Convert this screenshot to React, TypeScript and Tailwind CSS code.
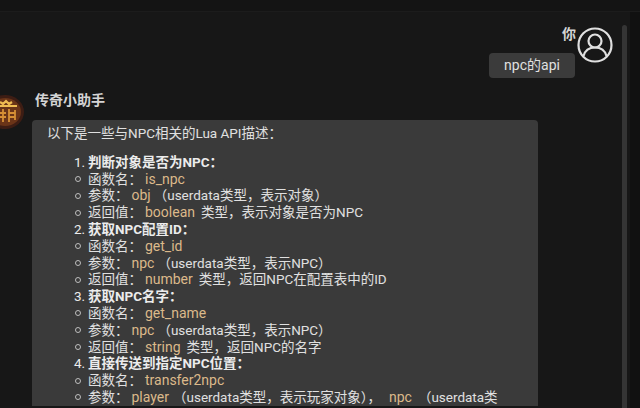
import React from 'react';
function C({ children, gap = 'sm', far }: { children: React.ReactNode; gap?: 'sm' | 'md' | 'lg'; far?: boolean }) {
  const cls = gap === 'lg' ? 'mr-[6px]' : gap === 'md' ? 'mr-[4px]' : 'mr-[3px]';
  return <span className={`text-[#dcb98a] text-[14px] ${far ? 'ml-[8px]' : 'ml-[3px]'} ${cls}`}>{children}</span>;
}
function Sub({ children }: { children: React.ReactNode }) {
  return (
    <div className="flex h-[16.8px] items-center">
      <span className="w-[6px] h-[6px] rounded-full border border-[#bdbdbd] ml-[43px] mr-[7px] shrink-0" />
      <span className="whitespace-nowrap">{children}</span>
    </div>
  );
}
function Head({ n, children }: { n: number; children: React.ReactNode }) {
  return (
    <div className="flex h-[16.8px] items-center font-bold whitespace-nowrap pl-[42px] text-[#ececec]">
      <span className="font-normal w-[14px] shrink-0">{n}.</span>
      {children}
    </div>
  );
}
export default function App() {
  return (
    <div className="w-[640px] h-[408px] overflow-hidden bg-[#171717] text-[#e0e0e0] text-[13.5px] flex flex-col font-['Roboto','Noto_Sans_CJK_SC',sans-serif] leading-[16.8px]">
      <div className="h-[12px] bg-[#141414] border-b border-[#1c1c1c] shrink-0" />
      <div className="flex-1 flex min-h-0">
        <div className="w-[622px] flex flex-col min-w-0">
          <div className="flex justify-end pr-[9px] pt-[14px] h-[78px] shrink-0">
            <div className="flex flex-col items-end">
              <div className="font-bold text-[14px] text-[#d4d4d4] h-[27px] -translate-x-[1px]">你</div>
              <div className="bg-[#3b3b3b] rounded-[4px] h-[25px] w-[86px] flex items-center justify-center mr-[2px] text-[14px]">npc的api</div>
            </div>
            <svg width="36" height="36" viewBox="0 0 36 36" fill="none" stroke="#e0e0e0" strokeWidth="2.2" className="mt-[1px]">
              <circle cx="18" cy="18" r="16.5" />
              <circle cx="18" cy="14" r="6.5" />
              <path d="M6.5 29c1.5-5.5 5.5-8.5 11.5-8.5s10 3 11.5 8.5" />
            </svg>
          </div>
          <div className="flex shrink-0 min-h-0">
            <div className="w-[32px] shrink-0 relative">
              <svg width="24" height="36" viewBox="0 0 24 36" className="absolute left-0 top-[4px]">
                <ellipse cx="5" cy="18" rx="19" ry="17" fill="#3d1d14" />
                <ellipse cx="5" cy="18" rx="16" ry="14" fill="#6a3418" />
                <path d="M0 8l3 2 3-3 3 3 3-2M0 12h17" stroke="#f0bc52" strokeWidth="2.2" fill="none" />
                <path d="M3 15v13M9 15v13M15 16v10M0 19h6M0 23h6M9 19h6M9 23h6" stroke="#d68f35" strokeWidth="1.8" fill="none" />
              </svg>
            </div>
            <div className="flex-1 min-w-0">
              <div className="font-bold text-[14px] text-[#d4d4d4] h-[30px] pl-[3px] pt-[2px]">传奇小助手</div>
              <div className="w-[506px] bg-[#3a3a3a] rounded-t-[4px] pt-[4px]">
                <div className="pl-[15px] whitespace-nowrap h-[16.8px] mt-[1px]">以下是一些与NPC相关的Lua API描述：</div>
                <div className="mt-[12px]">
                  <Head n={1}>判断对象是否为NPC：</Head>
                  <Sub>函数名：<C>is_npc</C></Sub>
                  <Sub>参数：<C>obj</C>（userdata类型，表示对象）</Sub>
                  <Sub>返回值：<C gap="lg">boolean</C>类型，表示对象是否为NPC</Sub>
                  <Head n={2}>获取NPC配置ID：</Head>
                  <Sub>函数名：<C>get_id</C></Sub>
                  <Sub>参数：<C>npc</C>（userdata类型，表示NPC）</Sub>
                  <Sub>返回值：<C gap="lg">number</C>类型，返回NPC在配置表中的ID</Sub>
                  <Head n={3}>获取NPC名字：</Head>
                  <Sub>函数名：<C>get_name</C></Sub>
                  <Sub>参数：<C>npc</C>（userdata类型，表示NPC）</Sub>
                  <Sub>返回值：<C gap="lg">string</C>类型，返回NPC的名字</Sub>
                  <Head n={4}>直接传送到指定NPC位置：</Head>
                  <Sub>函数名：<C>transfer2npc</C></Sub>
                  <Sub>参数：<C gap="md">player</C>（userdata类型，表示玩家对象），<C gap="lg" far>npc</C>（userdata类</Sub>
                </div>
              </div>
            </div>
          </div>
        </div>
        <div className="w-[18px] flex shrink-0">
          <div className="w-[5px] bg-[#353535] rounded-full mt-[13px] h-full" />
          <div className="w-[3px]" />
          <div className="flex-1 bg-[#111111]" />
        </div>
      </div>
    </div>
  );
}
